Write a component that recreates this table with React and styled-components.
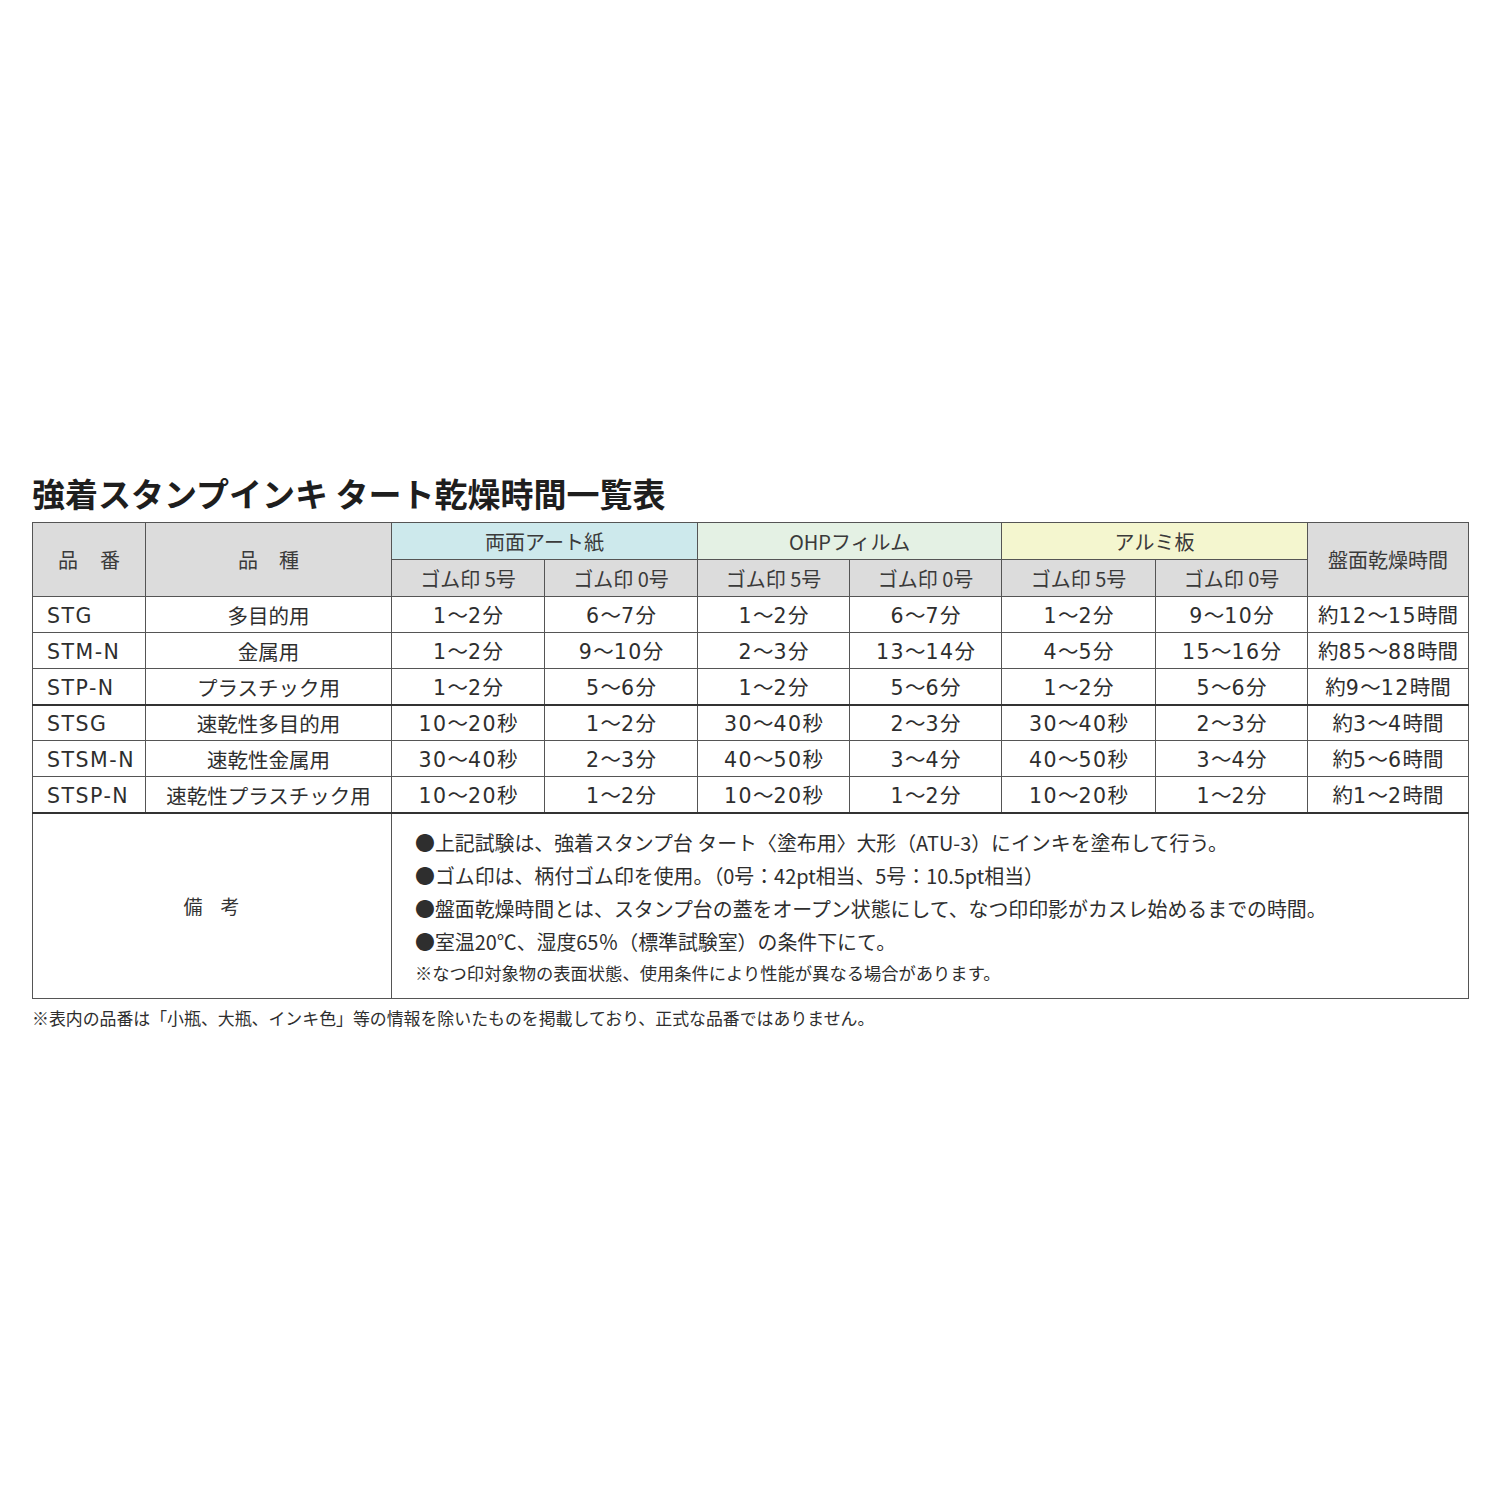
import React from "react";
import styled, { createGlobalStyle } from "styled-components";

const Global = createGlobalStyle`
  html, body { margin: 0; padding: 0; background: #fff; }
  body { font-family: "Noto Sans CJK JP", "Noto Sans", sans-serif; color: #2b2b2b; }
`;

const Page = styled.div`
  width: 1500px;
  height: 1500px;
  box-sizing: border-box;
  padding: 470px 32px 0 32px;
  display: flex;
  flex-direction: column;
`;

const Title = styled.h1`
  margin: 0 0 6px 0;
  font-size: 33px;
  line-height: 46px;
  font-weight: 700;
  color: #1e1e1e;
`;

const Table = styled.table`
  width: 1436px;
  border-collapse: collapse;
  table-layout: fixed;
  border: 1px solid #555;
`;

const Row = styled.tr`
  height: ${(p) => p.$h || 36}px;
  ${(p) => p.$thick && `& > td { border-top: 2px solid #333; }`}
`;

const H = styled.th`
  border: 1px solid #555;
  background: ${(p) => p.$bg || "#dcdcdc"};
  font-weight: 400;
  font-size: 20px;
  color: #3a3a3a;
  padding: 0 0 0 ${(p) => p.$ls || 0}px;
  text-align: center;
  vertical-align: middle;
  letter-spacing: ${(p) => p.$ls || 0}px;
`;

const D = styled.td`
  border: 1px solid #555;
  font-size: 20.5px;
  color: #2e2e2e;
  padding: ${(p) => (p.$left ? "1px 0 0 14px" : "1px 0 0 0")};
  text-align: ${(p) => (p.$left ? "left" : "center")};
  vertical-align: middle;
  white-space: nowrap;
  line-height: 1;
`;

const Num = styled.span`
  font-family: "DejaVu Sans", sans-serif;
  letter-spacing: 1.5px;
`;

const RemarkLabel = styled.td`
  border: 1px solid #555;
  border-top: 2px solid #333;
  text-align: center;
  vertical-align: middle;
  font-size: 19px;
  letter-spacing: 18px;
  padding-left: 18px;
  color: #333;
`;

const RemarkCell = styled.td`
  border: 1px solid #555;
  border-top: 2px solid #333;
  padding: 12px 0 10px 23px;
  vertical-align: top;
`;

const RemarkLine = styled.div`
  font-size: ${(p) => (p.$small ? 17.3 : 19.9)}px;
  line-height: ${(p) => (p.$small ? 30 : 33)}px;
  color: #2e2e2e;
  white-space: nowrap;
`;

const Footnote = styled.p`
  margin: 7px 0 0 0;
  font-size: 16.9px;
  line-height: 24px;
  color: #2e2e2e;
`;

const widths = [113, 246, 153, 153, 152, 152, 154, 152, 161];

const rows = [
  ["STG", "多目的用", "1〜2分", "6〜7分", "1〜2分", "6〜7分", "1〜2分", "9〜10分", "約12〜15時間"],
  ["STM-N", "金属用", "1〜2分", "9〜10分", "2〜3分", "13〜14分", "4〜5分", "15〜16分", "約85〜88時間"],
  ["STP-N", "プラスチック用", "1〜2分", "5〜6分", "1〜2分", "5〜6分", "1〜2分", "5〜6分", "約9〜12時間"],
  ["STSG", "速乾性多目的用", "10〜20秒", "1〜2分", "30〜40秒", "2〜3分", "30〜40秒", "2〜3分", "約3〜4時間"],
  ["STSM-N", "速乾性金属用", "30〜40秒", "2〜3分", "40〜50秒", "3〜4分", "40〜50秒", "3〜4分", "約5〜6時間"],
  ["STSP-N", "速乾性プラスチック用", "10〜20秒", "1〜2分", "10〜20秒", "1〜2分", "10〜20秒", "1〜2分", "約1〜2時間"],
];

function Cell({ text }) {
  const parts = text.split(/([0-9A-Za-z-]+)/).filter(Boolean);
  return parts.map((p, i) =>
    /^[0-9A-Za-z-]+$/.test(p) ? <Num key={i}>{p}</Num> : <React.Fragment key={i}>{p}</React.Fragment>
  );
}

export default function App() {
  return (
    <>
      <Global />
      <Page>
        <Title>強着スタンプインキ タート乾燥時間一覧表</Title>
        <Table>
          <colgroup>
            {widths.map((w, i) => (
              <col key={i} style={{ width: w }} />
            ))}
          </colgroup>
          <thead>
            <Row $h={37}>
              <H rowSpan={2} $ls={22}>品番</H>
              <H rowSpan={2} $ls={21}>品種</H>
              <H colSpan={2} $bg="#cde9ec">両面アート紙</H>
              <H colSpan={2} $bg="#e4f1e4">OHPフィルム</H>
              <H colSpan={2} $bg="#f4f6cf">アルミ板</H>
              <H rowSpan={2}>盤面乾燥時間</H>
            </Row>
            <Row $h={37}>
              {[0, 1, 2].map((i) => (
                <React.Fragment key={i}>
                  <H>ゴム印 5号</H>
                  <H>ゴム印 0号</H>
                </React.Fragment>
              ))}
            </Row>
          </thead>
          <tbody>
            {rows.map((r, i) => (
              <Row key={r[0]} $thick={i === 3}>
                {r.map((c, j) => (
                  <D key={j} $left={j === 0}>
                    <Cell text={c} />
                  </D>
                ))}
              </Row>
            ))}
            <Row $h={182}>
              <RemarkLabel colSpan={2}>備考</RemarkLabel>
              <RemarkCell colSpan={7}>
                <RemarkLine>●上記試験は、強着スタンプ台 タート〈塗布用〉大形（ATU-3）にインキを塗布して行う。</RemarkLine>
                <RemarkLine>●ゴム印は、柄付ゴム印を使用。（0号：42pt相当、5号：10.5pt相当）</RemarkLine>
                <RemarkLine>●盤面乾燥時間とは、スタンプ台の蓋をオープン状態にして、なつ印印影がカスレ始めるまでの時間。</RemarkLine>
                <RemarkLine>●室温20℃、湿度65％（標準試験室）の条件下にて。</RemarkLine>
                <RemarkLine $small>※なつ印対象物の表面状態、使用条件により性能が異なる場合があります。</RemarkLine>
              </RemarkCell>
            </Row>
          </tbody>
        </Table>
        <Footnote>※表内の品番は「小瓶、大瓶、インキ色」等の情報を除いたものを掲載しており、正式な品番ではありません。</Footnote>
      </Page>
    </>
  );
}
